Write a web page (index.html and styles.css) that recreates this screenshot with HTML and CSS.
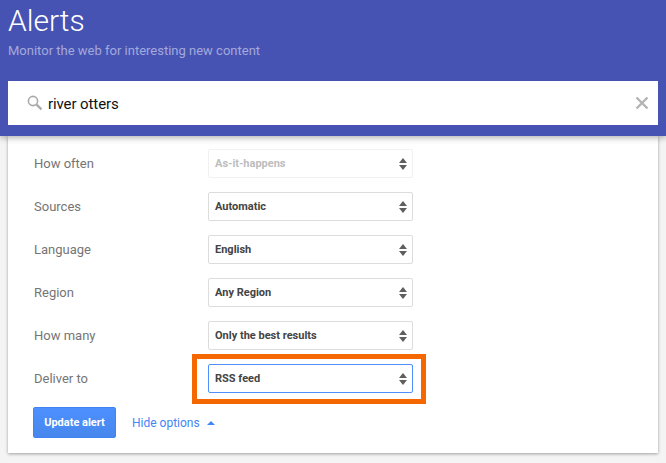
FILE: index.html
```html
<!DOCTYPE html>
<html lang="en">
<head>
<meta charset="utf-8">
<title>Alerts</title>
<link rel="stylesheet" href="styles.css">
</head>
<body>
<header class="header">
  <h1 class="title">Alerts</h1>
  <p class="subtitle">Monitor the web for interesting new content</p>
  <div class="search">
    <svg class="search-icon" width="16" height="16" viewBox="0 0 16 16"><circle cx="6" cy="6" r="4.6" fill="none" stroke="#aaa" stroke-width="1.6"/><path d="M9.6 9.6 14.4 14.4" stroke="#aaa" stroke-width="2.2"/></svg>
    <span class="query">river otters</span>
    <svg class="clear-icon" width="14" height="14" viewBox="0 0 14 14"><path d="M1.5 1.5 12.5 12.5M12.5 1.5 1.5 12.5" stroke="#b4b4b4" stroke-width="2.4"/></svg>
  </div>
</header>
<main class="card">
  <div class="row">
    <span class="label">How often</span>
    <div class="select disabled"><span>As-it-happens</span><i class="arrows"></i></div>
  </div>
  <div class="row">
    <span class="label">Sources</span>
    <div class="select"><span>Automatic</span><i class="arrows"></i></div>
  </div>
  <div class="row">
    <span class="label">Language</span>
    <div class="select"><span>English</span><i class="arrows"></i></div>
  </div>
  <div class="row">
    <span class="label">Region</span>
    <div class="select"><span>Any Region</span><i class="arrows"></i></div>
  </div>
  <div class="row">
    <span class="label">How many</span>
    <div class="select"><span>Only the best results</span><i class="arrows"></i></div>
  </div>
  <div class="row">
    <span class="label">Deliver to</span>
    <div class="select focused"><span>RSS feed</span><i class="arrows"></i></div>
  </div>
  <div class="actions">
    <button class="update" type="button">Update alert</button>
    <a class="toggle" href="#">Hide options</a>
    <i class="caret"></i>
  </div>
</main>
</body>
</html>
```
FILE: styles.css
```css
*, *::before, *::after { box-sizing: border-box; }
html, body { margin: 0; height: 100%; }
body {
  background: #f4f4f4;
  font-family: Roboto, "Liberation Sans", sans-serif;
  overflow: hidden;
}
.header {
  position: relative;
  z-index: 1;
  height: 136px;
  background: #4753b2;
  padding: 0 8px;
  box-shadow: 0 2px 6px rgba(0, 0, 0, 0.3);
}
.title {
  margin: 0;
  padding-top: 2px;
  height: 41px;
  font-size: 30px;
  line-height: 38px;
  font-weight: 300;
  color: #fff;
}
.subtitle {
  margin: 0;
  height: 40px;
  padding-top: 1px;
  font-size: 13px;
  line-height: 18px;
  color: #a3a9dc;
}
.search {
  height: 44px;
  background: #fff;
  display: flex;
  align-items: center;
  padding: 0 9px 0 19px;
}
.search-icon { flex: none; margin-right: 5px; }
.query {
  flex: 1;
  padding-top: 1px;
  font-size: 15px;
  letter-spacing: -0.1px;
  color: #111;
}
.card {
  margin: 0 8px;
  height: 317px;
  background: #fff;
  padding: 13px 25px 0;
  box-shadow: 0 1px 3px rgba(0, 0, 0, 0.35);
}
.row {
  display: flex;
  align-items: center;
  height: 29px;
  margin-bottom: 14px;
}
.label {
  width: 175px;
  padding-left: 1px;
  font-size: 13px;
  color: #757575;
}
.select {
  position: relative;
  display: flex;
  align-items: center;
  justify-content: space-between;
  width: 205px;
  height: 29px;
  padding: 0 5px 0 6px;
  border: 1px solid #dcdcdc;
  border-radius: 2px;
  background: #fff;
  font-size: 11px;
  font-weight: 700;
  color: #444;
}
.select.disabled { border-color: #f1f1f1; color: #bdbdbd; }
.select.focused { border-color: #4d90fe; }
.select.focused::after {
  content: "";
  position: absolute;
  left: -17px;
  top: -11px;
  width: 234px;
  height: 50px;
  border: 5px solid #f56700;
}
.arrows {
  position: relative;
  width: 8px;
  height: 12px;
}
.arrows::before,
.arrows::after {
  content: "";
  position: absolute;
  left: 0;
  border-left: 4px solid transparent;
  border-right: 4px solid transparent;
}
.arrows::before { top: 0; border-bottom: 5px solid #5f5f5f; }
.arrows::after { bottom: 0; border-top: 5px solid #5f5f5f; }
.actions {
  display: flex;
  align-items: center;
  margin-top: 1px;
  height: 31px;
}
.update {
  width: 83px;
  height: 31px;
  padding: 0;
  border: 1px solid #3f84f2;
  border-radius: 2px;
  background: linear-gradient(#4d90fe, #4787ed);
  color: #fff;
  font-family: inherit;
  font-size: 11px;
  font-weight: 700;
}
.toggle {
  margin-left: 16px;
  font-size: 12px;
  color: #4285f4;
  text-decoration: none;
}
.caret {
  margin-left: 7px;
  border-left: 4.5px solid transparent;
  border-right: 4.5px solid transparent;
  border-bottom: 4.5px solid #4285f4;
}
```
